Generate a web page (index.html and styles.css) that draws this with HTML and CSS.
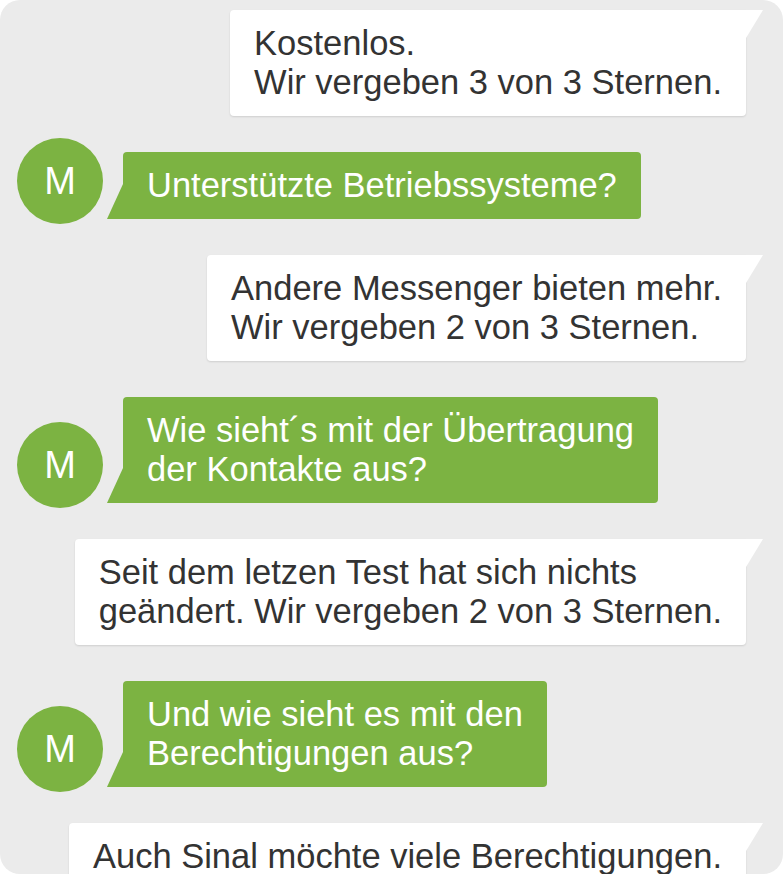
FILE: index.html
```html
<!DOCTYPE html>
<html lang="de">
<head>
<meta charset="utf-8">
<title>Chat</title>
<link rel="stylesheet" href="styles.css">
</head>
<body>
<div class="chat">
  <div class="row out">
    <div class="bubble white">Kostenlos.<br>Wir vergeben 3 von 3 Sternen.</div>
  </div>
  <div class="row in">
    <div class="avatar">M</div>
    <div class="bubble green">Unterstützte Betriebssysteme?</div>
  </div>
  <div class="row out">
    <div class="bubble white">Andere Messenger bieten mehr.<br>Wir vergeben 2 von 3 Sternen.</div>
  </div>
  <div class="row in">
    <div class="avatar">M</div>
    <div class="bubble green">Wie sieht´s mit der Übertragung<br>der Kontakte aus?</div>
  </div>
  <div class="row out">
    <div class="bubble white">Seit dem letzen Test hat sich nichts<br>geändert. Wir vergeben 2 von 3 Sternen.</div>
  </div>
  <div class="row in">
    <div class="avatar">M</div>
    <div class="bubble green">Und wie sieht es mit den<br>Berechtigungen aus?</div>
  </div>
  <div class="row out">
    <div class="bubble white">Auch Sinal möchte viele Berechtigungen.<br>&nbsp;</div>
  </div>
</div>
</body>
</html>
```
FILE: styles.css
```css
html, body {
  margin: 0;
  padding: 0;
  background: #ffffff;
}

.chat {
  width: 783px;
  height: 874px;
  box-sizing: border-box;
  background: #ebebeb;
  border-radius: 20px;
  overflow: hidden;
  padding-top: 10px;
  display: flex;
  flex-direction: column;
  gap: 36px;
  font-family: "Liberation Sans", Arial, sans-serif;
  font-size: 34.5px;
  line-height: 39px;
}

.row {
  display: flex;
  align-items: flex-end;
  flex-shrink: 0;
}

.row.out {
  justify-content: flex-end;
  padding-right: 37px;
}

.row.in {
  padding-left: 17px;
  gap: 20px;
}

.bubble {
  position: relative;
  padding: 14px 24px 14px 24px;
  border-radius: 4px;
  white-space: nowrap;
}

.bubble.white {
  background: #ffffff;
  color: #333333;
  border-top-right-radius: 0;
  box-shadow: 0 1px 2px rgba(0, 0, 0, 0.12);
}

.bubble.white::after {
  content: "";
  position: absolute;
  top: 0;
  right: -17px;
  width: 17px;
  height: 28px;
  background: #ffffff;
  clip-path: polygon(0 0, 100% 0, 0 100%);
}

.bubble.green {
  background: #7cb342;
  color: #ffffff;
  border-bottom-left-radius: 0;
}

.bubble.green::before {
  content: "";
  position: absolute;
  bottom: 0;
  left: -16px;
  width: 16px;
  height: 35px;
  background: #7cb342;
  clip-path: polygon(100% 0, 100% 100%, 0 100%);
}

.avatar {
  width: 86px;
  height: 86px;
  border-radius: 50%;
  background: #7cb342;
  color: #ffffff;
  display: flex;
  align-items: center;
  justify-content: center;
  font-size: 38px;
  flex-shrink: 0;
  margin-bottom: -5px;
  margin-top: -40px;
}
```
